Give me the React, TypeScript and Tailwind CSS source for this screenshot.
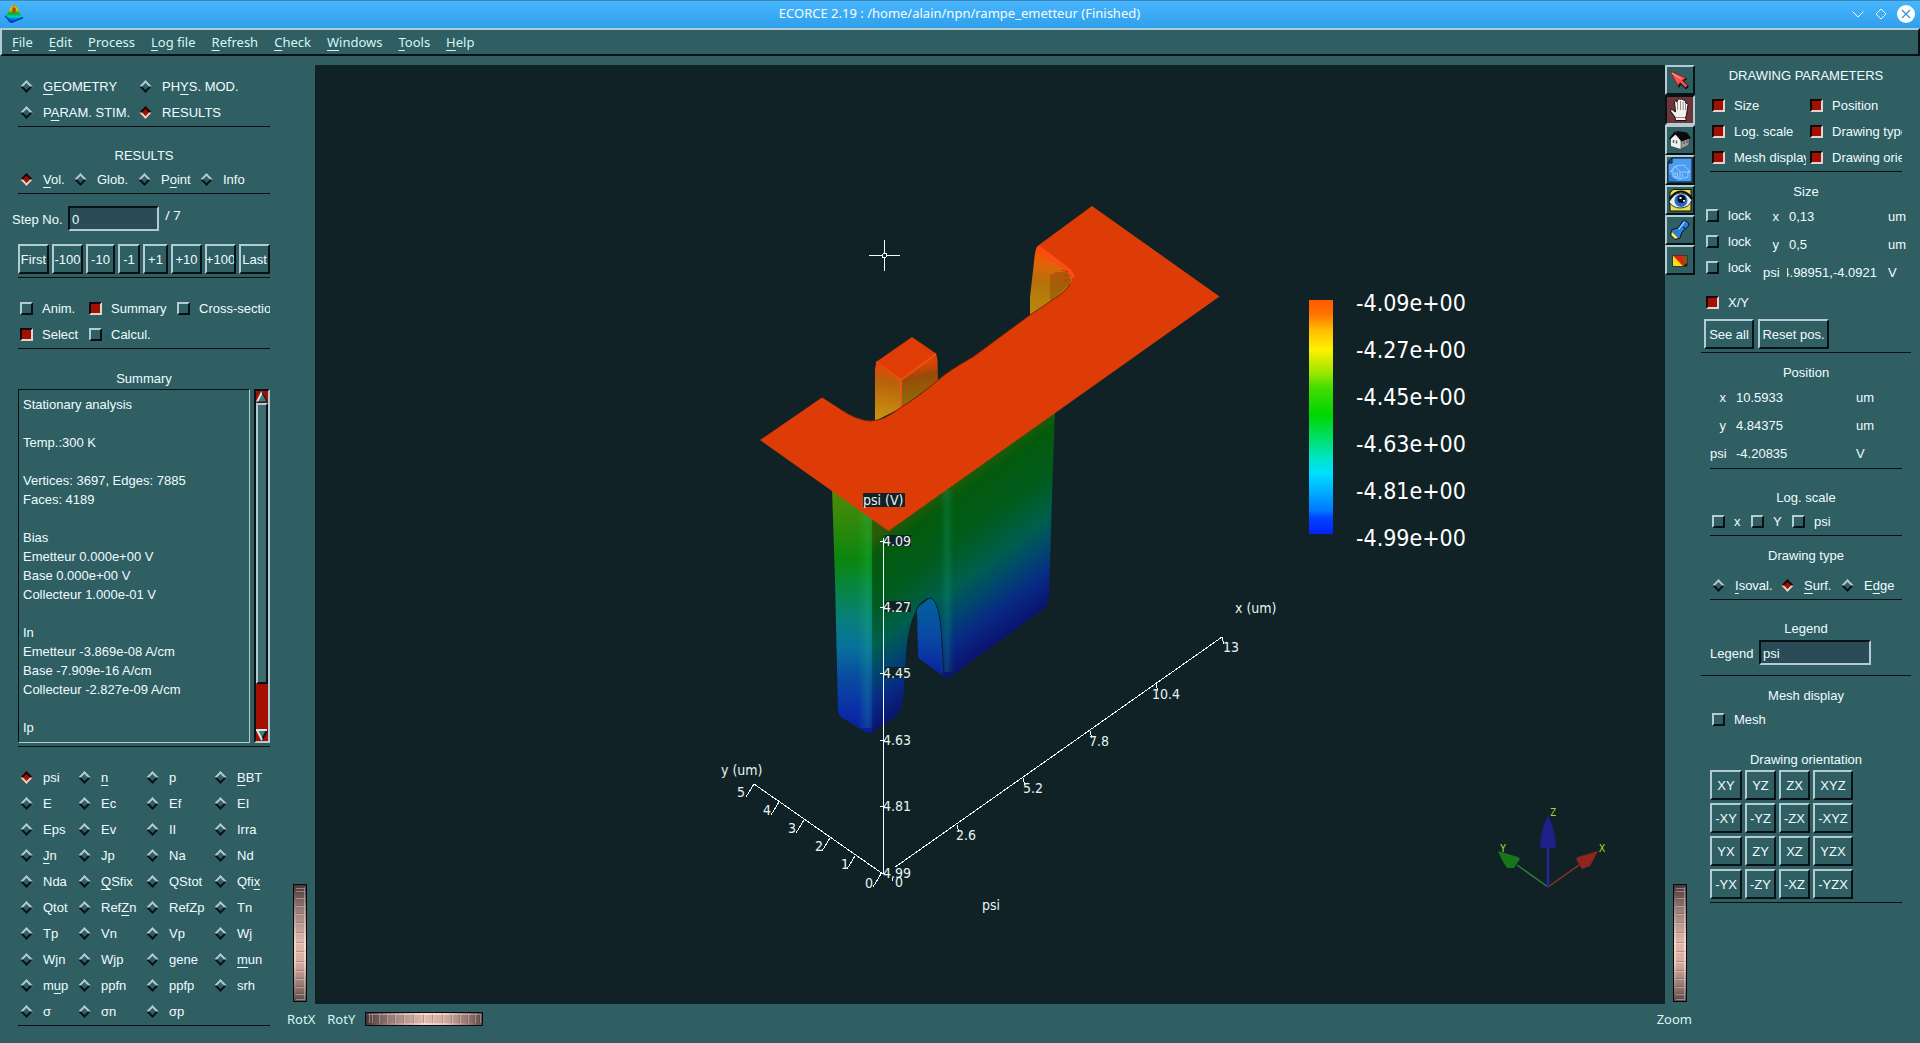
import type { ReactNode } from "react";

const RAISED =
  "border-2 border-t-[#b3cbd2] border-l-[#b3cbd2] border-b-[#071216] border-r-[#071216]";
const SUNKEN =
  "border-2 border-t-[#071216] border-l-[#071216] border-b-[#b3cbd2] border-r-[#b3cbd2]";

// "&" marks the mnemonic letter, as in most toolkits
function Mnemonic({ text }: { text: string }) {
  const at = text.indexOf("&");
  if (at < 0) return <>{text}</>;
  return (
    <>
      {text.slice(0, at)}
      <span className="underline decoration-1 underline-offset-3">{text[at + 1]}</span>
      {text.slice(at + 2)}
    </>
  );
}

function Radio({ name, label, on = false }: { name: string; label: string; on?: boolean }) {
  return (
    <label className="flex h-[26px] items-center gap-3 whitespace-nowrap">
      <input
        type="radio"
        name={name}
        defaultChecked={on}
        className="ml-0.5 size-[9px] shrink-0 rotate-45 appearance-none border-2 border-t-[#b3cbd2] border-l-[#b3cbd2] border-b-[#071216] border-r-[#071216] checked:border-t-[#14090a] checked:border-l-[#14090a] checked:border-b-[#e2d3cc] checked:border-r-[#e2d3cc] checked:bg-[#a30f00]"
      />
      <span className="pt-0.5"><Mnemonic text={label} /></span>
    </label>
  );
}

function Check({ label, on = false }: { label: string; on?: boolean }) {
  return (
    <label className="flex h-[26px] items-center gap-[9px] overflow-hidden whitespace-nowrap">
      <input
        type="checkbox"
        defaultChecked={on}
        className="size-[13px] shrink-0 appearance-none border-2 border-t-[#b3cbd2] border-l-[#b3cbd2] border-b-[#071216] border-r-[#071216] checked:border-t-[#14090a] checked:border-l-[#14090a] checked:border-b-[#e2d3cc] checked:border-r-[#e2d3cc] checked:bg-[#a30f00]"
      />
      <span className="pt-px">{label}</span>
    </label>
  );
}

function PushButton({ children, width = "" }: { children: ReactNode; width?: string }) {
  return (
    <button className={`flex h-[30px] items-center justify-center overflow-hidden whitespace-nowrap ${RAISED} ${width}`}>
      <span className="shrink-0 pt-0.5">{children}</span>
    </button>
  );
}

function Rule() {
  return <hr className="border-t border-[#071216]" />;
}

function Title({ children }: { children: ReactNode }) {
  return <h2 className="h-[22px] pt-px text-center leading-[22px]">{children}</h2>;
}

const WHEEL_MARKS = [3, 6, 13, 21, 29, 38, 48, 58, 67, 77, 86, 94, 102, 109, 114];

function Wheel({ id, label, vertical = false }: { id: string; label: string; vertical?: boolean }) {
  return (
    <div className={`relative shrink-0 ${vertical ? "h-[118px] w-3.5" : "h-3.5 w-[118px]"}`}>
      <svg viewBox={vertical ? "0 0 14 118" : "0 0 118 14"} className="block h-full w-full">
        <defs>
          <linearGradient id={`${id}-shade`} x1="0" y1="0" x2="0" y2="1">
            <stop offset="0" stopColor="#43343a" />
            <stop offset="0.2" stopColor="#a08480" />
            <stop offset="0.5" stopColor="#ffd6c8" />
            <stop offset="0.68" stopColor="#f0c4b8" />
            <stop offset="0.9" stopColor="#927671" />
            <stop offset="1" stopColor="#5d4a47" />
          </linearGradient>
        </defs>
        <rect width="100%" height="100%" fill="#050a0c" />
        <g transform={vertical ? undefined : "translate(0 14) rotate(-90)"}>
          <rect x="1" y="1" width="12" height="116" fill={`url(#${id}-shade)`} />
          <rect x="3" y="3" width="8" height="112" fill="#6b4a48" opacity="0.2" />
          {WHEEL_MARKS.map((y) => (
            <g key={y}>
              <rect x="3" y={y} width="9" height="1" fill="#5b4340" opacity="0.3" />
              <rect x="3" y={y + 1} width="9" height="1" fill="#fff0ea" opacity="0.35" />
            </g>
          ))}
          <rect x="11" y="3" width="1" height="112" fill="#fff0ea" opacity="0.3" />
        </g>
      </svg>
      <input id={id} type="range" aria-label={label} className="absolute inset-0 h-full w-full opacity-0" />
    </div>
  );
}

const MENUS = ["&File", "&Edit", "&Process", "&Log file", "&Refresh", "&Check", "&Windows", "&Tools", "&Help"];

const STEPS = [
  ["First", "w-[31px]"],
  ["-100", "w-[31px]"],
  ["-10", "w-[29px]"],
  ["-1", "w-[22px]"],
  ["+1", "w-[25px]"],
  ["+10", "w-[31px]"],
  ["+100", "w-[31px]"],
  ["Last", "w-[31px]"],
];

const SUMMARY = `Stationary analysis

Temp.:300 K

Vertices: 3697, Edges: 7885
Faces: 4189

Bias
Emetteur 0.000e+00 V
Base 0.000e+00 V
Collecteur 1.000e-01 V

In
Emetteur -3.869e-08 A/cm
Base -7.909e-16 A/cm
Collecteur -2.827e-09 A/cm

Ip`;

const VARIABLES = [
  "psi", "&n", "p", "&BBT",
  "E", "Ec", "Ef", "EI",
  "Eps", "Ev", "II", "Irra",
  "&Jn", "Jp", "Na", "Nd",
  "Nda", "&QSfix", "QStot", "Qfi&x",
  "Qtot", "Ref&Zn", "RefZp", "Tn",
  "Tp", "Vn", "Vp", "Wj",
  "Wjn", "Wjp", "gene", "&mun",
  "m&up", "ppfn", "ppfp", "srh",
  "σ", "σn", "σp",
];

const ORIENTATIONS = [
  "XY", "YZ", "ZX", "XYZ",
  "-XY", "-YZ", "-ZX", "-XYZ",
  "YX", "ZY", "XZ", "YZX",
  "-YX", "-ZY", "-XZ", "-YZX",
];

function TitleBar() {
  return (
    <header className="flex h-7 items-center border-t border-[#3b87ba] bg-linear-to-b from-[#48b6ff] to-[#2f9fea] pr-[5px] pb-0.5 pl-1 text-[#f4fcff]">
      <svg viewBox="0 0 20 20" className="size-5">
        <defs>
          <linearGradient id="peak" x1="0" y1="0" x2="0" y2="1">
            <stop offset="0.05" stopColor="#c8a000" />
            <stop offset="0.25" stopColor="#e0c800" />
            <stop offset="0.45" stopColor="#18a818" />
            <stop offset="0.65" stopColor="#00d0b0" />
            <stop offset="0.85" stopColor="#0060f0" />
            <stop offset="1" stopColor="#0020b0" />
          </linearGradient>
        </defs>
        <path d="M1 12 L4 9 C6 6 6 1 10 1 C14 1 14 7 16 10 L19 13 L18 15 L8 19 L5 18 L1 13 Z" fill="url(#peak)" />
        <path d="M8 5 L10 3 L12 5 L11 9 L9 9 Z" fill="#b04808" />
        <path d="M1 12 L8 18 L19 13.500" fill="none" stroke="#0838c8" strokeWidth="1.500" />
      </svg>
      <h1 className="flex-1 pl-11 text-center font-['Noto_Sans',sans-serif] text-[13px]">
        ECORCE 2.19 : /home/alain/npn/rampe_emetteur (Finished)
      </h1>
      <div className="flex items-center gap-[9px]">
        <button aria-label="Minimize">
          <svg viewBox="0 0 14 18" className="h-[18px] w-3.5" fill="none" stroke="currentColor">
            <path d="M1.500 6.500 L7 12 L12.500 6.500" />
          </svg>
        </button>
        <button aria-label="Maximize">
          <svg viewBox="0 0 14 18" className="h-[18px] w-3.5" fill="none" stroke="currentColor">
            <path d="M7 4 L12 9 L7 14 L2 9 Z" />
          </svg>
        </button>
        <button aria-label="Close">
          <svg viewBox="0 0 18 18" className="size-[18px]">
            <circle cx="9" cy="9" r="9" fill="#fff" />
            <path d="M5 5 L13 13 M13 5 L5 13" stroke="#2f93dc" strokeWidth="1.200" />
          </svg>
        </button>
      </div>
    </header>
  );
}

function ScrollBar() {
  return (
    <div className={`flex w-4 flex-col bg-[#a30f00] ${SUNKEN}`}>
      <svg viewBox="0 0 12 12" className="h-3 w-full">
        <path d="M6 1 L11 11 L1 11 Z" fill="#3f7a7c" />
        <path d="M6 1 L1 11" stroke="#d9e6e8" strokeWidth="2" />
        <path d="M6 1 L11 11 L1 11" fill="none" stroke="#071216" />
      </svg>
      <div className={`bg-[#3d6b6e] ${RAISED} basis-[281px]`} />
      <div className="flex-1" />
      <svg viewBox="0 0 12 12" className="h-3 w-full">
        <path d="M1 1 L11 1 L6 11 Z" fill="#3f7a7c" />
        <path d="M11 1 L6 11" stroke="#071216" strokeWidth="2" />
        <path d="M0 1 L11 1 M1 1 L6 11" stroke="#d9e6e8" strokeWidth="2" />
      </svg>
    </div>
  );
}

function LeftPanel() {
  return (
    <aside className="w-[278px] shrink-0 pr-2 pl-[18px]">
      <div className="grid grid-cols-[119px_1fr] pt-[17px] pb-px pl-0.5">
        <Radio name="mode" label="&GEOMETRY" />
        <Radio name="mode" label="PH&YS. MOD." />
        <Radio name="mode" label="P&ARAM. STIM." />
        <Radio name="mode" label="RESULTS" on />
      </div>
      <Rule />

      <div className="pt-[17px]">
        <Title>RESULTS</Title>
        <div className="grid grid-cols-[54px_64px_62px_1fr] pb-px pl-0.5">
          <Radio name="scope" label="&Vol." on />
          <Radio name="scope" label="Glob." />
          <Radio name="scope" label="P&oint" />
          <Radio name="scope" label="Info" />
        </div>
      </div>
      <Rule />

      <div className="-ml-1.5 flex pt-3">
        <label htmlFor="step" className="w-14 pt-px leading-[25px]">Step No.</label>
        <input id="step" defaultValue="0" className={`h-[25px] w-[91px] bg-[#294c56] px-0.5 pt-px ${SUNKEN}`} />
        <span className="pl-1.5 font-['Noto_Sans',sans-serif] leading-[18px]">/ 7</span>
      </div>
      <div className="flex gap-[3px] pt-3 pb-[3px]">
        {STEPS.map(([label, width]) => (
          <PushButton key={label} width={width}>{label}</PushButton>
        ))}
      </div>
      <Rule />

      <div className="grid grid-cols-[69px_88px_1fr] pt-[17px] pb-px pl-0.5">
        <Check label="Anim." />
        <Check label="Summary" on />
        <Check label="Cross-section" />
        <Check label="Select" on />
        <Check label="Calcul." />
      </div>
      <Rule />

      <div className="pt-[18px] pb-[3px]">
        <Title>Summary</Title>
        <div className="flex gap-1">
          <textarea
            readOnly
            aria-label="Summary"
            rows={18}
            value={SUMMARY}
            className="block min-w-0 flex-1 resize-none overflow-hidden border border-t-[#071216] border-l-[#071216] border-b-[#b3cbd2] border-r-[#b3cbd2] py-[5px] pl-1 leading-[19px]"
          />
          <ScrollBar />
        </div>
      </div>
      <Rule />

      <div className="grid grid-cols-[58px_68px_68px_1fr] pt-[17px] pb-px pl-0.5">
        {VARIABLES.map((v) => (
          <Radio key={v} name="variable" label={v} on={v === "psi"} />
        ))}
      </div>
      <Rule />
    </aside>
  );
}

const Z_TICKS = [
  [541, "4.09"],
  [607, "4.27"],
  [673, "4.45"],
  [740, "4.63"],
  [806, "4.81"],
  [873, "4.99"],
] as const;

const X_TICKS = [
  [891, 874, 895, 887, "0"],
  [957, 825, 956, 840, "2.6"],
  [1023, 778, 1023, 793, "5.2"],
  [1090, 731, 1089, 746, "7.8"],
  [1156, 684, 1152, 699, "10.4"],
  [1222, 637, 1223, 652, "13"],
] as const;

const Y_TICKS = [
  [881, 874, 865, 888, "0"],
  [855, 856, 841, 869, "1"],
  [830, 838, 815, 851, "2"],
  [804, 820, 788, 833, "3"],
  [779, 802, 763, 815, "4"],
  [754, 784, 737, 797, "5"],
] as const;

const LEVELS = ["-4.09e+00", "-4.27e+00", "-4.45e+00", "-4.63e+00", "-4.81e+00", "-4.99e+00"];

const SURFACE =
  "M760 440 L822 397.500 L840 409 Q856 420 870 421 Q884 421 901.500 407 Q918 397 937 381 Q948 371 973 357 L1030 315 L1057 297 Q1069 288 1072 281 Q1074 274 1065 267 L1037.500 246 L1092 206 L1219.500 296.500 L888.500 531 Z";

function Viewport() {
  return (
    <svg
      viewBox="315 65 1350 939"
      role="img"
      aria-label="psi"
      className="block min-h-0 min-w-0 flex-1 bg-[#112226] font-['DejaVu_Sans_Condensed','DejaVu_Sans',sans-serif] text-[14px]"
    >
      <defs>
        <linearGradient id="front" gradientUnits="userSpaceOnUse" x1="880" y1="529" x2="974" y2="658">
          <stop offset="0" stopColor="#2d5a08" />
          <stop offset="0.12" stopColor="#045a0c" />
          <stop offset="0.36" stopColor="#005c1e" />
          <stop offset="0.56" stopColor="#005f4c" />
          <stop offset="0.7" stopColor="#00496c" />
          <stop offset="0.85" stopColor="#082a84" />
          <stop offset="1" stopColor="#0a1470" />
        </linearGradient>
        <linearGradient id="side" gradientUnits="userSpaceOnUse" x1="0" y1="492" x2="0" y2="733">
          <stop offset="0" stopColor="#4f8a0a" />
          <stop offset="0.28" stopColor="#0b860d" />
          <stop offset="0.38" stopColor="#08863a" />
          <stop offset="0.52" stopColor="#088078" />
          <stop offset="0.64" stopColor="#08719c" />
          <stop offset="0.76" stopColor="#084ea0" />
          <stop offset="0.92" stopColor="#0a2ba8" />
          <stop offset="1" stopColor="#0a1c96" />
        </linearGradient>
        <linearGradient id="stripe" x1="0" y1="0" x2="1" y2="0">
          <stop offset="0" stopColor="#20e060" stopOpacity="0" />
          <stop offset="0.6" stopColor="#20d080" stopOpacity="0.2" />
          <stop offset="1" stopColor="#20e060" stopOpacity="0" />
        </linearGradient>
        <linearGradient id="fold" x1="0" y1="0" x2="1" y2="0">
          <stop offset="0" stopColor="#10a060" stopOpacity="0" />
          <stop offset="0.5" stopColor="#10a078" stopOpacity="0.28" />
          <stop offset="1" stopColor="#10a060" stopOpacity="0" />
        </linearGradient>
        <linearGradient id="inner" gradientUnits="userSpaceOnUse" x1="0" y1="600" x2="0" y2="676">
          <stop offset="0" stopColor="#05609c" />
          <stop offset="0.5" stopColor="#0848a4" />
          <stop offset="1" stopColor="#0a20a0" />
        </linearGradient>
        <linearGradient id="tower" gradientUnits="userSpaceOnUse" x1="1050" y1="248" x2="1040" y2="315">
          <stop offset="0" stopColor="#ff4508" />
          <stop offset="0.25" stopColor="#e06408" />
          <stop offset="0.5" stopColor="#b8700c" />
          <stop offset="1" stopColor="#b58c0c" />
        </linearGradient>
        <linearGradient id="box-left" gradientUnits="userSpaceOnUse" x1="894" y1="368" x2="886" y2="420">
          <stop offset="0" stopColor="#e8480a" />
          <stop offset="0.25" stopColor="#b8600c" />
          <stop offset="1" stopColor="#c89410" />
        </linearGradient>
        <linearGradient id="box-right" gradientUnits="userSpaceOnUse" x1="916" y1="366" x2="922" y2="400">
          <stop offset="0" stopColor="#d84408" />
          <stop offset="0.3" stopColor="#9a4a08" />
          <stop offset="1" stopColor="#8e6a0a" />
        </linearGradient>
        <linearGradient id="scale" x1="0" y1="0" x2="0" y2="1">
          <stop offset="0" stopColor="#ff5a00" />
          <stop offset="0.06" stopColor="#ff7200" />
          <stop offset="0.13" stopColor="#ffbe00" />
          <stop offset="0.21" stopColor="#fff000" />
          <stop offset="0.3" stopColor="#a8e800" />
          <stop offset="0.38" stopColor="#40dc00" />
          <stop offset="0.49" stopColor="#00d600" />
          <stop offset="0.58" stopColor="#00de5c" />
          <stop offset="0.67" stopColor="#00e4c0" />
          <stop offset="0.74" stopColor="#00e0ff" />
          <stop offset="0.81" stopColor="#00b4ff" />
          <stop offset="0.9" stopColor="#0078ff" />
          <stop offset="0.93" stopColor="#0044ff" />
          <stop offset="1" stopColor="#0024f8" />
        </linearGradient>
      </defs>

      {/* inside wall seen through the arch */}
      <path d="M917 608 L931 597 L942 612 L946 678 L921 660 Q918 658 918 655 Z" fill="url(#inner)" />
      {/* front wall */}
      <path
        d="M871 500 L1055 410 L1052.500 480 L1049 597 Q1048 605 1045 608 L950 677 Q946 680 944 676 L941.500 637 Q940 603 931 598 Q922 599 916 610 Q908 626 906 652 L904.500 680 Q903 706 900 711 Q897 717 883 725 L871 733 Z"
        fill="url(#front)"
      />
      <rect x="940" y="490" width="14" height="182" fill="url(#fold)" />
      <path d="M944 676 L941.500 637 Q940 603 931 598 Q922 599 916 610" fill="none" stroke="#04242c" />
      {/* side wall */}
      <path d="M832 488 L835 580 L837 667 L838 710 Q838 714 841 717 L864 731 Q867 733 872 732.500 L872 500 Z" fill="url(#side)" />
      <rect x="858" y="500" width="16" height="228" fill="url(#stripe)" />
      {/* rear tower */}
      <path d="M1037.500 246 Q1035 249 1034 262 L1030 297 L1030 316 L1057 298 Q1072 288 1073 279 L1062 262 Z" fill="url(#tower)" />
      <path d="M1050 275 L1056 272 L1068 272 L1071 282 L1050 303 Z" fill="#7a3c06" opacity="0.35" />
      {/* small block */}
      <path d="M876 363 L875 370 L875 421 L901 408 L901 380 Z" fill="url(#box-left)" />
      <path d="M901 380 L936 353 L937.500 360 L938 381 L901 408 Z" fill="url(#box-right)" />
      <path d="M876 362 L912 337 L936 353.500 L901 380 Z" fill="#e03c06" />
      <path d="M876 362 L901 380 L936 354 M901 380 L901 408" fill="none" stroke="#ff5512" strokeWidth="2" opacity="0.7" />
      <path d={SURFACE} fill="#de3c06" />
      <path d="M840 409 Q856 420 870 421 Q884 421 901.500 407 Q918 397 937 381 Q948 371 973 357 L1030 315 L1057 297 Q1067 290 1070 284" fill="none" stroke="#7a2204" />
      <path d="M1038 247 L1065 267 Q1072 272 1073 278" fill="none" stroke="#ff4a14" strokeWidth="4" />
      <path d="M1062 270 L1068 272 M1063 275 L1070 276 M1064 280 L1071 280" stroke="#b83806" />

      <g stroke="#f0ffff" fill="none" shapeRendering="crispEdges">
        <path d="M883.500 538 V874" />
        <path d="M883 874 L754 784" />
        <path d="M891 870 L1222 637" />
        {Z_TICKS.map(([y]) => (
          <path key={y} d={`M879.500 ${y + 0.5} H888`} />
        ))}
        {X_TICKS.map(([x, y]) => (
          <path key={x} d={`M${x} ${y} l2 7`} />
        ))}
        {Y_TICKS.map(([x, y]) => (
          <path key={x} d={`M${x} ${y} l-8 13`} />
        ))}
        <path d="M869 255.500 H882 M887 255.500 H900 M884.500 240 V253 M884.500 258 V271" />
        <rect x="882.500" y="253.500" width="4" height="4" rx="1.500" />
      </g>

      <g fill="#112226">
        <rect x="863" y="493" width="42" height="14" />
        {Z_TICKS.map(([y]) => (
          <rect key={y} x="885" y={y - 6} width="26" height="11" />
        ))}
      </g>
      <g fill="#e4f4f4">
        <text x="863" y="505">psi (V)</text>
        {Z_TICKS.map(([y, t]) => (
          <text key={t} x="883" y={y + 5}>{t}</text>
        ))}
        {X_TICKS.map(([, , x, y, t]) => (
          <text key={t} x={x} y={y}>{t}</text>
        ))}
        {Y_TICKS.map(([, , x, y, t]) => (
          <text key={t} x={x} y={y}>{t}</text>
        ))}
        <text x="721" y="775">y (um)</text>
        <text x="1235" y="613">x (um)</text>
        <text x="982" y="910">psi</text>
      </g>

      <rect x="1309" y="300" width="24" height="234" fill="url(#scale)" />
      <g fill="#fff" className="text-[23px]">
        {LEVELS.map((t, i) => (
          <text key={t} x="1356" y={311 + i * 47}>{t}</text>
        ))}
      </g>

      <g strokeWidth="1.500">
        <path d="M1548 887 L1517 865" stroke="#27803a" />
        <path d="M1548 887 L1579 865" stroke="#96302a" />
        <path d="M1548 887 V848" stroke="#26269a" strokeWidth="2.500" />
        <path d="M1498 851 L1518 857 L1520 859 L1514 868 L1507 868 Q1501 860 1498 851 Z" fill="#17751c" />
        <path d="M1598 851 L1578 857 L1576 859 L1582 869 L1590 866 Z" fill="#92241f" />
        <path d="M1548 815 Q1556 832 1556 848 H1540 Q1540 832 1548 815 Z" fill="#1f1f88" />
      </g>
      <g fill="#b4d23c" className="font-['DejaVu_Sans_Mono',monospace] text-[10px]">
        <text x="1550" y="816">Z</text>
        <text x="1500" y="852">Y</text>
        <text x="1599" y="852">X</text>
      </g>
    </svg>
  );
}

const TOOLS: { name: string; active?: boolean; icon: ReactNode }[] = [
  {
    name: "Select",
    icon: (
      <>
        <path d="M6.500 7.500 L22.500 14 L19 16 L24 21.500 L21 24.500 L16 19.500 L14 23 Z" fill="#141010" />
        <path d="M5 6 L21 13 L17.500 15.500 L22.500 20.500 L20.500 22.500 L15 17.500 L13 21 Z" fill="#f0564e" stroke="#7a1414" strokeWidth="0.700" />
        <path d="M7 8 L16 14" stroke="#ffb0a8" />
      </>
    ),
  },
  {
    name: "Pan",
    active: true,
    icon: (
      <>
        <path
          d="M10 22 L5.500 16 Q5 14.500 7 14.500 L10.500 17 L9.500 7 Q10.500 5 12 7 L12.500 5 Q14 3 15.500 4.500 Q17 3 18 5 Q20 4 20.500 7 L21 8.500 Q22.500 7.500 23 9.500 L21.500 20 L20.500 23 L21.500 25.500 H10.500 Z"
          fill="#f4f2ea"
          stroke="#181214"
        />
        <path d="M12.500 7 V15 M15.500 6 V15 M18.200 7 V15 M20.500 9 V15" stroke="#6c6864" strokeWidth="0.700" />
        <path d="M11 22.500 H20" stroke="#8c8a86" />
      </>
    ),
  },
  {
    name: "Home",
    icon: (
      <>
        <path d="M6 13 L11 9 L16 16 V24 L6 21 Z" fill="#f2f2f2" />
        <path d="M16 16 L24 13 V20 L16 24 Z" fill="#9c9c9c" stroke="#303030" strokeWidth="0.600" />
        <path d="M4 13.500 L10 6 L11 8 L12 6 L22 7.500 L26 13 L16.500 16.500 L10.500 9.500 L5 14.500 Z" fill="#0a0a0a" />
        <path d="M8.500 15 V18 M11.500 15.500 V18.500" stroke="#606060" strokeWidth="1.500" />
        <path d="M19 16.500 V19 M22 15.500 V18" stroke="#3c3c3c" />
      </>
    ),
  },
  {
    name: "Set home",
    icon: (
      <>
        <path d="M7 3 H27 V27 H3 V8 Z" fill="#4b9cf2" stroke="#0a1018" />
        <path d="M7 3 V8 H3 Z" fill="#2a66b0" stroke="#0a1018" />
        <path d="M4 18 L12 26 H4 Z" fill="#2f7fd8" />
        <path d="M6 17 L10 11 L19 10 L25 17 H23 V22 L15 24 V17 L10.500 11.500 L6 17 M8 16 V22 L15 24 M15 17 L25 17 M10 18 V22 H12.500 V18 Z M17.500 19 V22" fill="none" stroke="#a8dcff" strokeWidth="0.800" />
      </>
    ),
  },
  {
    name: "View all",
    icon: (
      <>
        <path d="M8 4.500 H26 V26 H5 V8 Z" fill="#e9e04a" stroke="#141408" />
        <path d="M4 17 Q9 8 16 8 Q23 9 27 15 Q24 23 15 23 Q8 23 4 17 Z" fill="#e6eef4" stroke="#0c1016" strokeWidth="0.800" />
        <circle cx="16" cy="15.500" r="6.500" fill="#2468c8" />
        <circle cx="16.500" cy="14" r="4" fill="#060a14" />
        <path d="M4.500 14 Q10 6 17 6.500 Q24 8 27 14" fill="none" stroke="#0a0e12" strokeWidth="2" />
        <path d="M14.500 12 h2 v2 h-2 Z M18 15 h2 v1.500 h-2 Z" fill="#fff" />
      </>
    ),
  },
  {
    name: "Seek",
    icon: (
      <>
        <path d="M19.500 5 L24 8.500 L23.500 11 L17 17 L15 23 L10 24.500 L5.500 20 L7 14.500 L13 13 L17.500 6.500 Z" fill="#2a7ce0" stroke="#0a1420" />
        <path d="M7 16.500 L13.500 23 L10 24 L6 20 Z" fill="#f4ee6a" stroke="#4a4a10" strokeWidth="0.600" />
        <path d="M19.500 7 L13.500 14.500" stroke="#8cc4ff" strokeWidth="1.500" />
        <path d="M18 12 L20 13.500" stroke="#0a2c60" strokeWidth="1.500" />
      </>
    ),
  },
  {
    name: "Camera type",
    icon: (
      <>
        <rect x="7.500" y="10" width="15" height="11.500" fill="#2a1808" />
        <path d="M8 10.500 H18 V21 Z" fill="#e02010" />
        <path d="M8 10.500 L18 21 H8 Z" fill="#ffd818" />
        <path d="M18 10.500 H22 V18 L18 21 Z" fill="#8a5410" />
      </>
    ),
  },
];

function ToolBar() {
  return (
    <div className="w-9 shrink-0">
      {TOOLS.map(({ name, active, icon }) => (
        <button
          key={name}
          aria-label={name}
          className={`block size-[30px] ${active ? `bg-[#6e3538] ${SUNKEN}` : RAISED}`}
        >
          <svg viewBox="2 2 26 26" className="size-full" fill="none">{icon}</svg>
        </button>
      ))}
    </div>
  );
}

function Quantity({ rows }: { rows: string[][] }) {
  return (
    <div className="grid grid-cols-[16px_110px_1fr] gap-x-2.5 pt-px">
      {rows.map(([name, value, unit]) => (
        <div key={name} className="col-span-3 grid h-7 grid-cols-subgrid items-center">
          <span className="text-right">{name}</span>
          <span>{value}</span>
          <span>{unit}</span>
        </div>
      ))}
    </div>
  );
}

function RightPanel() {
  return (
    <aside className="w-[219px] shrink-0 pr-[9px]">
      <div className="mx-[9px] pt-2">
        <Title>DRAWING PARAMETERS</Title>
        <div className="grid grid-cols-[94px_92px] gap-x-1 pt-1.5 pb-px pl-0.5">
          <Check label="Size" on />
          <Check label="Position" on />
          <Check label="Log. scale" on />
          <Check label="Drawing type" on />
          <Check label="Mesh display" on />
          <Check label="Drawing orientation" on />
        </div>
        <Rule />
      </div>

      <div className="pt-2 pb-[3px]">
        <Title>Size</Title>
        <div className="flex pl-[5px]">
          <div className="w-[57px]">
            <Check label="lock" />
            <Check label="lock" />
            <Check label="lock" />
          </div>
          <div className="flex-1 pt-px">
            {[
              ["x", "0,13", "um"],
              ["y", "0,5", "um"],
              ["psi", "-4.98951,-4.0921", "V"],
            ].map(([name, value, unit]) => (
              <div key={name} className="flex h-7 items-center">
                <span className="w-4 text-right">{name}</span>
                <span className={`ml-2 flex w-[90px] overflow-hidden pl-0.5 ${name === "psi" ? "justify-end" : ""}`}>
                  {value}
                </span>
                <span className="ml-[11px]">{unit}</span>
              </div>
            ))}
          </div>
        </div>
        <div className="pt-0.5 pl-[5px]">
          <Check label="X/Y" on />
        </div>
        <div className="flex gap-1 pt-1 pl-[3px]">
          <PushButton width="w-[50px]">See all</PushButton>
          <PushButton width="w-[71px]">Reset pos.</PushButton>
        </div>
      </div>
      <Rule />

      <div className="mx-[9px] pt-2">
        <Title>Position</Title>
        <Quantity rows={[["x", "10.5933", "um"], ["y", "4.84375", "um"], ["psi", "-4.20835", "V"]]} />
        <Rule />
      </div>

      <div className="mx-[9px] pt-[17px]">
        <Title>Log. scale</Title>
        <div className="grid grid-cols-[39px_41px_1fr] pb-px pl-0.5">
          <Check label="x" />
          <Check label="Y" />
          <Check label="psi" />
        </div>
        <Rule />
      </div>

      <div className="mx-[9px] pt-2">
        <Title>Drawing type</Title>
        <div className="grid grid-cols-[69px_60px_1fr] pt-1.5 pb-px pl-0.5">
          <Radio name="drawing" label="&Isoval." />
          <Radio name="drawing" label="&Surf." on />
          <Radio name="drawing" label="E&dge" />
        </div>
        <Rule />
      </div>

      <div className="mx-[9px] pt-[17px] pb-[9px]">
        <Title>Legend</Title>
        <div className="flex pt-px">
          <label htmlFor="legend" className="w-[49px] pt-px leading-[25px]">Legend</label>
          <input id="legend" defaultValue="psi" className={`h-[25px] w-28 bg-[#294c56] px-0.5 pt-px ${SUNKEN}`} />
        </div>
      </div>
      <Rule />

      <div className="mx-[9px] pt-2">
        <Title>Mesh display</Title>
        <div className="pl-0.5">
          <Check label="Mesh" />
        </div>
      </div>

      <div className="mx-[9px] pt-4">
        <Title>Drawing orientation</Title>
        <div className="grid grid-cols-[32px_31px_31px_40px] gap-[3px] pb-[3px]">
          {ORIENTATIONS.map((o) => (
            <PushButton key={o}>{o}</PushButton>
          ))}
        </div>
        <Rule />
      </div>
    </aside>
  );
}

export default function App() {
  return (
    <div className="flex min-h-screen flex-col bg-[#2f5f63] font-['Liberation_Sans',Arial,sans-serif] text-[13px] text-[#effcff]">
      <TitleBar />
      <nav className={`flex h-7 items-center gap-4 pt-0.5 pl-2.5 font-['Noto_Sans',sans-serif] text-[#d6f6f4] ${RAISED}`}>
        {MENUS.map((m) => (
          <button key={m}><Mnemonic text={m} /></button>
        ))}
      </nav>
      <main className="flex flex-1">
        <LeftPanel />
        <section className="flex min-w-0 flex-1 flex-col pt-[9px]">
          <div className="flex min-h-0 flex-1">
            <div className="flex w-[37px] shrink-0 items-end pb-0.5 pl-[15px]">
              <Wheel id="rotx" label="RotX" vertical />
            </div>
            <Viewport />
            <div className="flex shrink-0 flex-col justify-between">
              <ToolBar />
              <div className="pb-0.5 pl-2">
                <Wheel id="zoom" label="Zoom" vertical />
              </div>
            </div>
          </div>
          <div className="flex h-[39px] shrink-0 px-[9px] pt-2 font-['Noto_Sans',sans-serif] leading-[14px] text-[#d6f6f4]">
            <label htmlFor="rotx">RotX</label>
            <label htmlFor="roty" className="pr-2.5 pl-3">RotY</label>
            <Wheel id="roty" label="RotY" />
            <label htmlFor="zoom" className="ml-auto">Zoom</label>
          </div>
        </section>
        <RightPanel />
      </main>
    </div>
  );
}
